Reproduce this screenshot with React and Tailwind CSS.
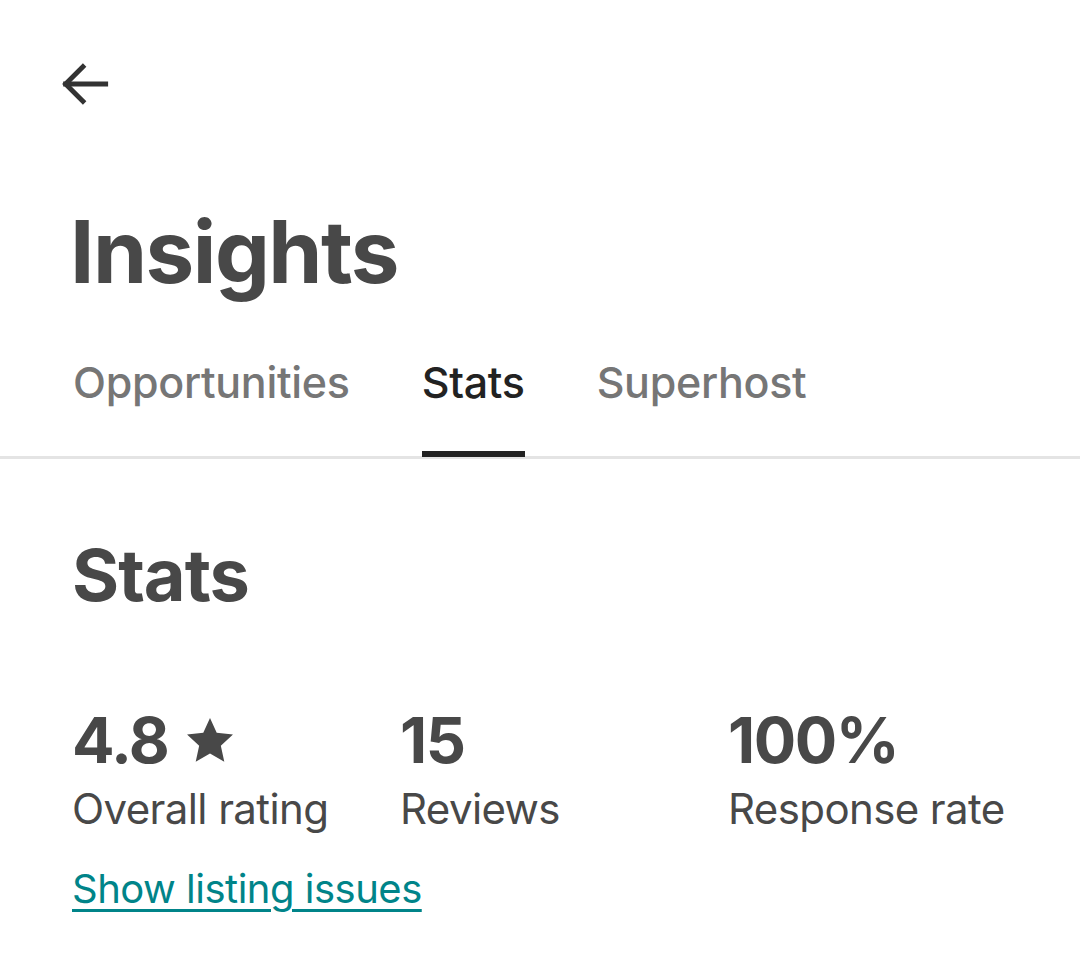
import React from "react";

const font = { fontFamily: "Inter, 'Noto Sans', sans-serif" };

const Stat = ({ value, label, star, width }) => (
  <div className={`flex flex-col ${width}`}>
    <div className="flex items-center gap-4 text-[63px] font-bold leading-[72px] tracking-[-1.5px] text-[#484848]">
      <span>{value}</span>
      {star && (
        <svg viewBox="0 0 24 24" className="h-[52px] w-[52px] fill-[#484848]">
          <path d="M12 1.8l3.1 6.9 7.5.8-5.6 5.1 1.6 7.4L12 18.2 5.4 22l1.6-7.4L1.4 9.5l7.5-.8z" />
        </svg>
      )}
    </div>
    <div className="mt-[7px] text-[42px] leading-[52px] tracking-[-0.6px] text-[#484848]">{label}</div>
  </div>
);

export default function App() {
  return (
    <div className="min-h-screen w-[1080px] bg-white" style={font}>
      {/* Back arrow */}
      <div className="px-[58px] pt-[58px]">
        <svg viewBox="0 0 48 48" className="h-[52px] w-[52px]" fill="none" stroke="#333" strokeWidth="4.5" strokeLinecap="square">
          <path d="M44 24H7" />
          <path d="M23 8L7 24l16 16" />
        </svg>
      </div>

      {/* Title */}
      <h1 className="mt-[92px] px-[70px] text-[87px] font-bold leading-[100px] tracking-[-1.5px] text-[#484848]">
        Insights
      </h1>

      {/* Tabs */}
      <div className="mt-[54px] flex gap-[72px] border-b-[3px] border-[#e4e4e4] px-[73px] tracking-[-0.3px]">
        <div className="pb-[48px] text-[43px] font-medium leading-[52px] text-[#767676]">Opportunities</div>
        <div className="relative pb-[48px] text-[43px] font-medium leading-[52px] text-[#222]">
          Stats
          <div className="absolute bottom-[-1px] left-0 right-0 h-[6px] bg-[#222]" />
        </div>
        <div className="pb-[48px] text-[43px] font-medium leading-[52px] text-[#767676]">Superhost</div>
      </div>

      {/* Stats */}
      <div className="px-[72px]">
        <h2 className="mt-[76px] text-[72px] font-bold leading-[80px] tracking-[-1px] text-[#484848]">Stats</h2>
        <div className="mt-[89px] flex">
          <Stat value="4.8" label="Overall rating" star width="w-[328px]" />
          <Stat value="15" label="Reviews" width="w-[328px]" />
          <Stat value="100%" label="Response rate" />
        </div>
        <a href="#" className="mt-[28px] inline-block text-[40px] leading-[52px] tracking-[-0.5px] text-[#008489] underline decoration-[3px] underline-offset-[6px]">
          Show listing issues
        </a>
      </div>
    </div>
  );
}
